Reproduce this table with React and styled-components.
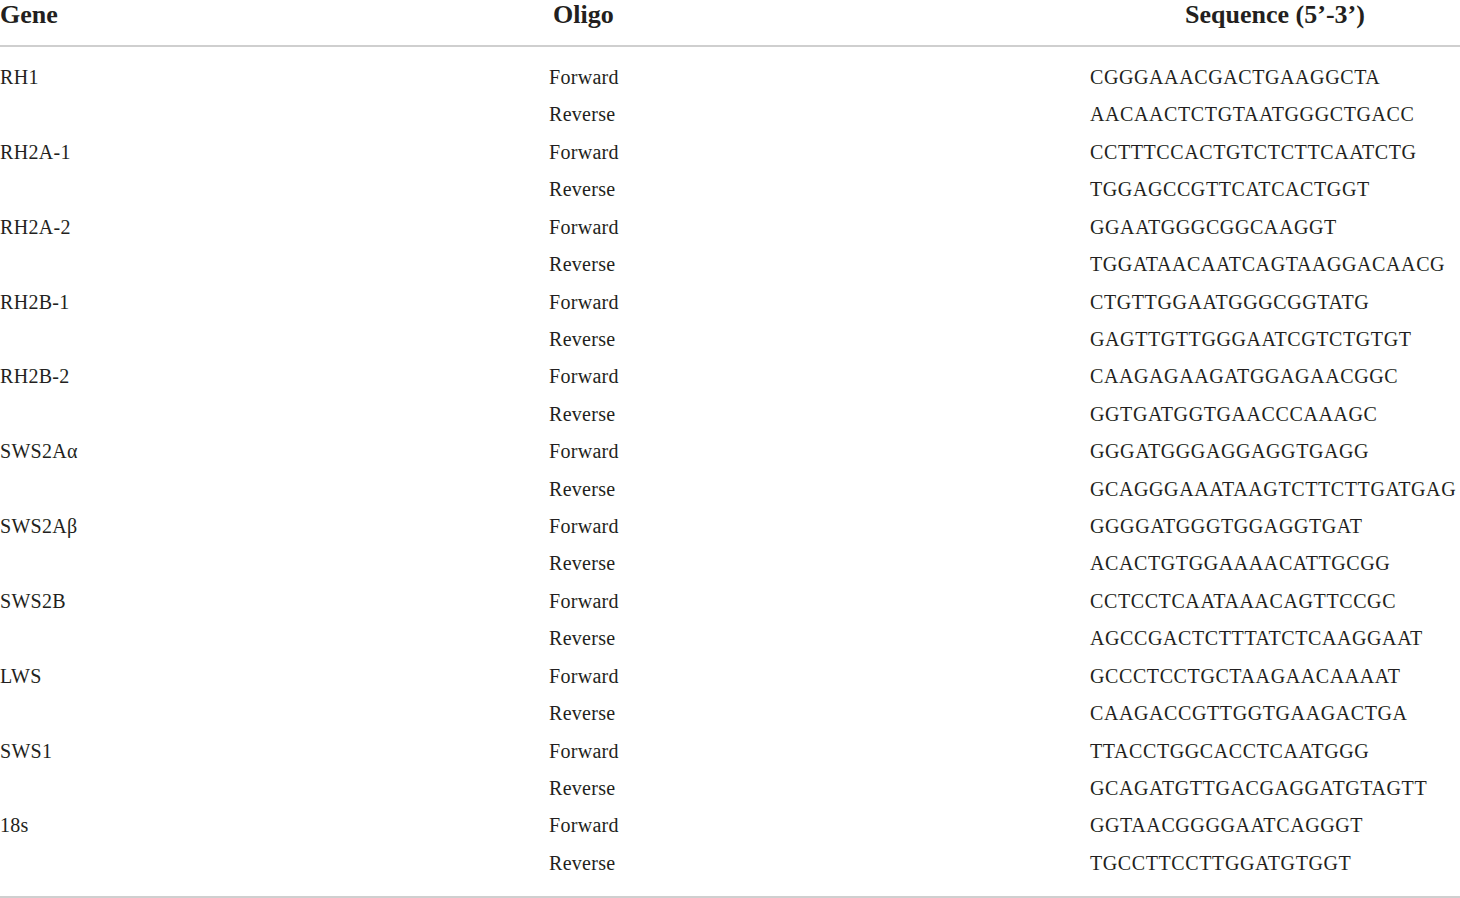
import React from "react";
import styled, { createGlobalStyle } from "styled-components";

const Global = createGlobalStyle`
  html, body { margin: 0; padding: 0; background: #ffffff; overflow: hidden; }
  body { font-family: "Liberation Serif", "Times New Roman", serif; color: #231f20; }
`;

const Table = styled.div`
  width: 1460px;
  display: grid;
  grid-template-columns: 549px 541px 1fr;
  border-bottom: 2px solid #cfcfcf;
  padding-bottom: 14px;
`;

const HeadCell = styled.div`
  box-sizing: border-box;
  font-weight: bold;
  font-size: 26px;
  line-height: 24px;
  height: 47px;
  padding-top: 3px;
  color: #231f20;
  border-bottom: 2px solid #cfcfcf;
  margin-bottom: 12px;
  text-align: ${(p) => p.$align || "left"};
  padding-left: ${(p) => p.$pad || 0}px;
  white-space: nowrap;
`;

const Cell = styled.div`
  font-size: 20px;
  height: 37.43px;
  line-height: 37.43px;
  white-space: nowrap;
  color: #231f20;
  letter-spacing: ${(p) => (p.$seq ? 0.6 : 0.3)}px;
`;

const data = [
  ["RH1", "CGGGAAACGACTGAAGGCTA", "AACAACTCTGTAATGGGCTGACC"],
  ["RH2A-1", "CCTTTCCACTGTCTCTTCAATCTG", "TGGAGCCGTTCATCACTGGT"],
  ["RH2A-2", "GGAATGGGCGGCAAGGT", "TGGATAACAATCAGTAAGGACAACG"],
  ["RH2B-1", "CTGTTGGAATGGGCGGTATG", "GAGTTGTTGGGAATCGTCTGTGT"],
  ["RH2B-2", "CAAGAGAAGATGGAGAACGGC", "GGTGATGGTGAACCCAAAGC"],
  ["SWS2Aα", "GGGATGGGAGGAGGTGAGG", "GCAGGGAAATAAGTCTTCTTGATGAG"],
  ["SWS2Aβ", "GGGGATGGGTGGAGGTGAT", "ACACTGTGGAAAACATTGCGG"],
  ["SWS2B", "CCTCCTCAATAAACAGTTCCGC", "AGCCGACTCTTTATCTCAAGGAAT"],
  ["LWS", "GCCCTCCTGCTAAGAACAAAAT", "CAAGACCGTTGGTGAAGACTGA"],
  ["SWS1", "TTACCTGGCACCTCAATGGG", "GCAGATGTTGACGAGGATGTAGTT"],
  ["18s", "GGTAACGGGGAATCAGGGT", "TGCCTTCCTTGGATGTGGT"],
];

export default function App() {
  return (
    <>
      <Global />
      <Table>
        <HeadCell>Gene</HeadCell>
        <HeadCell $pad={4}>Oligo</HeadCell>
        <HeadCell $align="center">Sequence (5’-3’)</HeadCell>
        {data.map(([gene, fwd, rev]) => (
          <React.Fragment key={gene}>
            <Cell>{gene}</Cell>
            <Cell>Forward</Cell>
            <Cell $seq>{fwd}</Cell>
            <Cell />
            <Cell>Reverse</Cell>
            <Cell $seq>{rev}</Cell>
          </React.Fragment>
        ))}
      </Table>
    </>
  );
}
